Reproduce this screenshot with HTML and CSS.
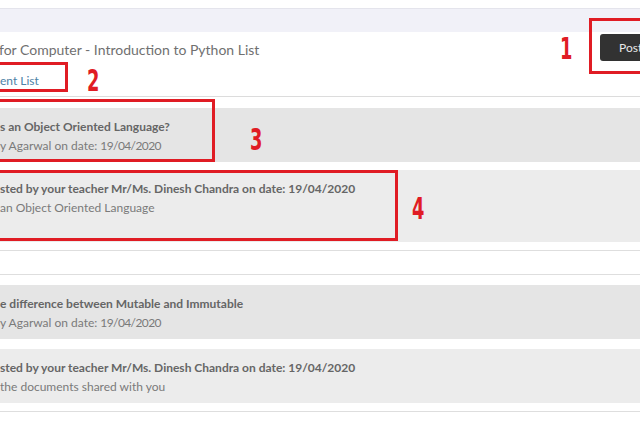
FILE: index.html
```html
<!DOCTYPE html>
<html>
<head>
<meta charset="utf-8">
<link rel="stylesheet" href="styles.css">
</head>
<body>
<div class="topstrip"></div>
<div class="band"></div>
<section class="panel">
  <div class="head">
    <h1 class="title">for Computer - Introduction to Python List</h1>
    <span class="num num-1">1</span>
    <div class="post-wrap">
      <button class="post">Post</button>
      <span class="mark mark-1"></span>
    </div>
  </div>
  <div class="links">
    <a class="link">ent List</a>
    <span class="mark mark-2"></span>
    <span class="num num-2">2</span>
  </div>
</section>

<div class="thread">
  <div class="item q">
    <p class="strong">s an Object Oriented Language?</p>
    <p class="meta">y Agarwal on date: <span class="date">19/04/2020</span></p>
    <span class="mark mark-3"></span>
    <span class="num num-3">3</span>
  </div>
  <div class="item a tall">
    <p class="strong">sted by your teacher Mr/Ms. Dinesh Chandra on date: 19/04/2020</p>
    <p class="meta">an Object Oriented Language</p>
    <span class="mark mark-4"></span>
    <span class="num num-4">4</span>
  </div>
</div>

<div class="spacer"></div>

<div class="thread second">
  <div class="item q">
    <p class="strong">e difference between Mutable and Immutable</p>
    <p class="meta">y Agarwal on date: <span class="date">19/04/2020</span></p>
  </div>
  <div class="item a">
    <p class="strong">sted by your teacher Mr/Ms. Dinesh Chandra on date: 19/04/2020</p>
    <p class="meta">the documents shared with you</p>
  </div>
</div>
</body>
</html>
```

FILE: styles.css
```css
* { box-sizing: border-box; }
html, body { margin: 0; padding: 0; background: #fff; }
body {
  width: 640px;
  height: 427px;
  overflow: hidden;
  font-family: Lato, "Open Sans", sans-serif;
  color: #777;
}
.topstrip {
  height: 9px;
  background: #fff;
  border-bottom: 1px solid #e4e4ec;
}
.band {
  height: 23px;
  background: #f1f1f8;
}
.panel {
  background: #fff;
  height: 65px;
  border-bottom: 1px solid #dcdcdc;
  padding-top: 1px;
}
.head {
  display: flex;
  align-items: center;
  height: 28px;
}
.title {
  margin: 0 0 0 -1px;
  font-size: 14px;
  font-weight: 400;
  color: #707070;
  flex: 1;
  padding-top: 5px;
}
.post-wrap {
  position: relative;
  width: 40px;
  height: 27px;
  margin-left: 30px;
}
.post {
  display: block;
  width: 50px;
  height: 27px;
  border: 0;
  border-radius: 3px;
  background: #323232;
  color: #e8e8e8;
  font-family: Lato, sans-serif;
  font-size: 12px;
  text-align: left;
  padding: 0 0 0 19px;
}
.num {
  position: relative;
  display: inline-block;
  font-family: "DejaVu Sans Condensed", "DejaVu Sans", sans-serif;
  font-weight: 700;
  color: #e01c24;
  font-size: 30px;
  line-height: 1;
  transform: scaleX(0.66);
  transform-origin: left center;
}
.num-1 { top: 2px; left: 5px; margin-right: -4px; }
.links {
  position: relative;
  display: flex;
  align-items: center;
  height: 36px;
}
.link {
  font-size: 12px;
  color: #4d82a6;
  padding-top: 2px;
}
.mark {
  position: absolute;
  border: 3px solid #e01c24;
}
.mark-1 { left: -11px; top: -16px; width: 60px; height: 56px; }
.mark-2 { left: -10px; top: 1px; width: 78px; height: 30px; }
.num-2 { margin-left: 48px; top: 2px; }

.thread {
  border-bottom: 1px solid #dedede;
  padding: 11px 0 8px;
}
.thread.second { padding-top: 10px; }
.item {
  position: relative;
  height: 54px;
  padding: 9px 0 0 0;
  background: #e5e5e5;
}
.item.a { background: #ececec; margin-top: 8px; }
.thread.second .item.a { margin-top: 10px; }
.item.tall { height: 72px; }
.item p { margin: 0; font-size: 12px; line-height: 19px; white-space: nowrap; }
.strong { font-weight: 700; color: #666; }
.meta { color: #7a7a7a; }
.date { letter-spacing: -0.6px; }
.mark-3 { left: -10px; top: -9px; width: 225px; height: 63px; }
.num-3 { position: absolute; left: 250px; top: 17px; }
.mark-4 { left: -10px; top: 0; width: 408px; height: 71px; }
.num-4 { position: absolute; left: 412px; top: 24px; }
.spacer {
  height: 24px;
  border-bottom: 1px solid #dedede;
}
```
